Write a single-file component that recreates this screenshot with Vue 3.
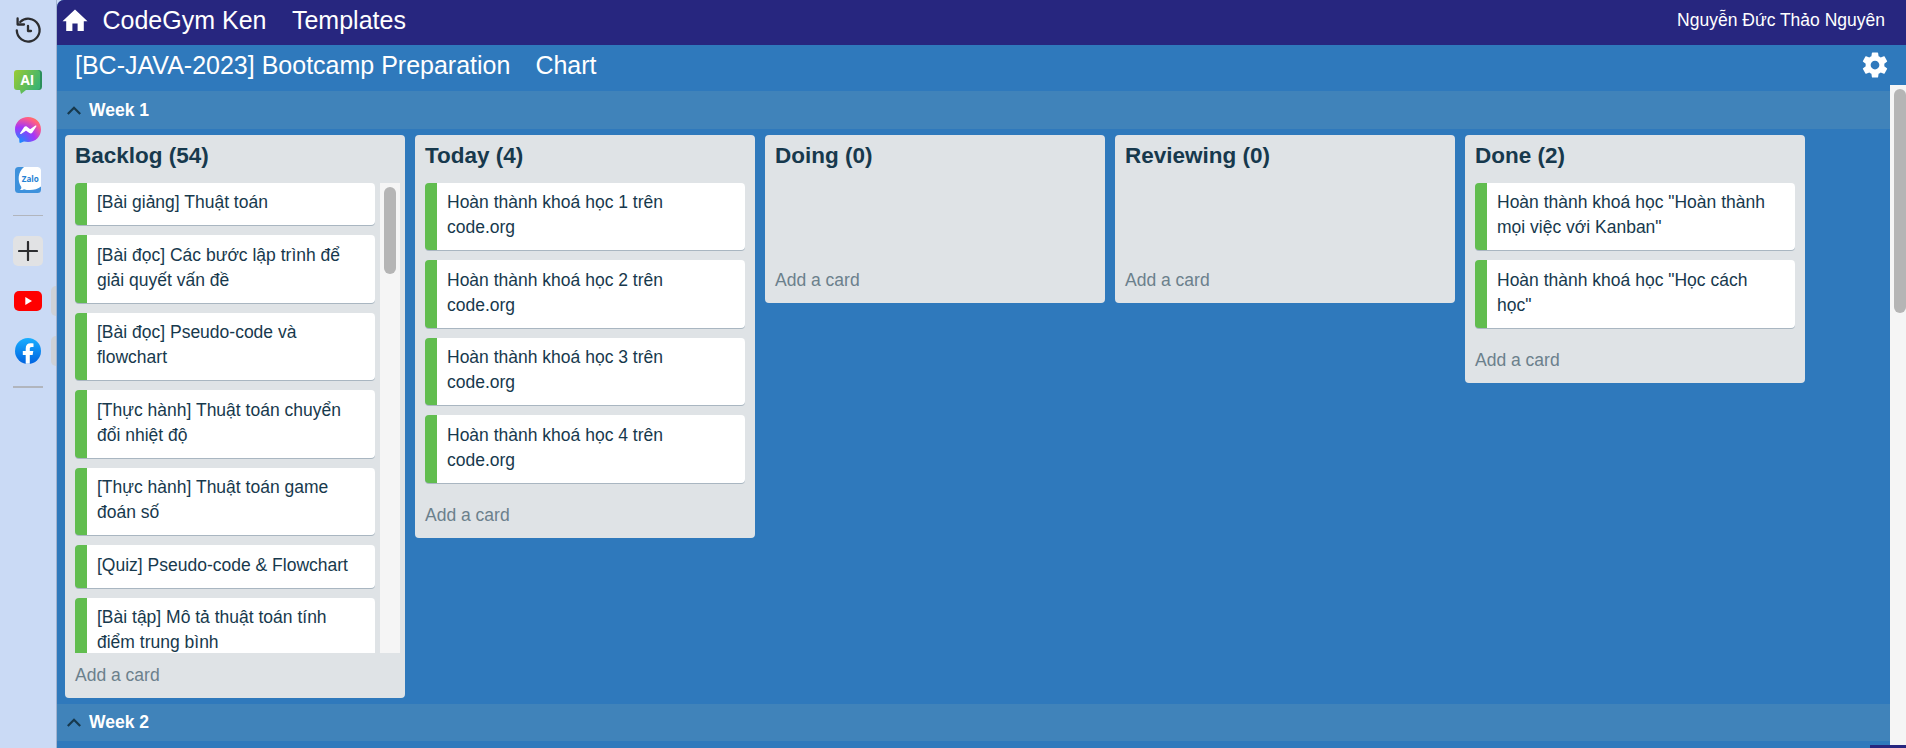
<script setup>
const today = [1, 2, 3, 4].map((n) => `Hoàn thành khoá học ${n} trên code.org`)
const columns = [
  {
    title: 'Backlog (54)',
    scroll: true,
    cards: [
      '[Bài giảng] Thuật toán',
      '[Bài đọc] Các bước lập trình để giải quyết vấn đề',
      '[Bài đọc] Pseudo-code và flowchart',
      '[Thực hành] Thuật toán chuyển đổi nhiệt độ',
      '[Thực hành] Thuật toán game đoán số',
      '[Quiz] Pseudo-code & Flowchart',
      '[Bài tập] Mô tả thuật toán tính điểm trung bình',
    ],
  },
  { title: 'Today (4)', cards: today },
  { title: 'Doing (0)', cards: [] },
  { title: 'Reviewing (0)', cards: [] },
  {
    title: 'Done (2)',
    cards: ['Hoàn thành khoá học "Hoàn thành mọi việc với Kanban"', 'Hoàn thành khoá học "Học cách học"'],
  },
]
</script>

<template>
  <div class="window">
    <aside class="side">
      <svg class="history" width="30" height="30" viewBox="0 0 30 30" fill="none" stroke="#2c2d30" stroke-width="2.3" stroke-linecap="round" stroke-linejoin="round">
        <path d="M3.800 15.500A11.400 11.400 0 1 0 7.200 7" />
        <path d="M4.600 3.500V9.500H11" />
        <path d="M15 11V16H18" />
      </svg>
      <svg class="ai" width="30" height="26" viewBox="0 0 30 26">
        <defs>
          <linearGradient id="aiFill" x1="0" y1="0" x2="1" y2="0.5">
            <stop offset="0" stop-color="#9acb33" /><stop offset="1" stop-color="#3db471" />
          </linearGradient>
        </defs>
        <rect x="4" y="1" width="25" height="20" rx="3.500" fill="#2b8f5b" />
        <path d="M4 1H24a3 3 0 0 1 3 3V18a3 3 0 0 1-3 3H13L8 25 7 21H4a3 3 0 0 1-3-3V4A3 3 0 0 1 4 1Z" fill="url(#aiFill)" />
        <text x="14.400" y="15.800" text-anchor="middle" fill="#fff" font-family="Open Sans, sans-serif" font-weight="700" font-size="13.500">AI</text>
      </svg>
      <svg class="messenger" width="26" height="26" viewBox="0 0 26 26">
        <defs>
          <radialGradient id="msg" cx="0.18" cy="1" r="1.1">
            <stop offset="0" stop-color="#0b94ff" /><stop offset="0.55" stop-color="#a334fa" />
            <stop offset="0.9" stop-color="#ff5c87" /><stop offset="1" stop-color="#ff7061" />
          </radialGradient>
        </defs>
        <path d="M13 0C5.600 0 0 5.400 0 12.400c0 3.800 1.600 7 4.200 9.300L4.400 25c0 .9.7 1.100 1.300.8L9 24.400c1.200.3 2.600.5 4 .5 7.400 0 13-5.400 13-12.500S20.400 0 13 0Z" fill="url(#msg)" />
        <path d="M5.200 16 9 10.200c.7-1 2-1.200 3-.5l2.600 2c.4.3.8.3 1.200 0L20.400 8.600c.6-.4 1.300.2.9.8L17.400 15.500c-.6 1-2 1.200-3 .5L11.500 14c-.3-.2-.7-.2-1 0L6.100 17c-.6.4-1.300-.3-.9-1Z" fill="#fff" />
      </svg>
      <svg class="zalo" width="26" height="26" viewBox="0 0 26 26">
        <rect width="26" height="26" rx="3.500" fill="#3d91dc" />
        <path d="M9 0H23a3 3 0 0 1 3 3V19.500C22 23 14 24 9 22.200 7.500 23 6 23.200 5 23c1-.8 1.500-1.800 1.300-3C2 14 3 4.500 9 0Z" fill="#fff" />
        <text x="6.800" y="14.500" textLength="17" lengthAdjust="spacingAndGlyphs" fill="#2582d4" font-family="Open Sans, sans-serif" font-weight="700" font-size="9">Zalo</text>
      </svg>
      <i class="rule"></i>
      <div class="plus">
        <svg width="20" height="20" viewBox="0 0 20 20" stroke="#2c2d30" stroke-width="2.200" stroke-linecap="round"><path d="M1 10H19M10 1V19" /></svg>
      </div>
      <div class="site youtube">
        <svg width="28" height="20" viewBox="0 0 28 20">
          <rect width="28" height="20" rx="5" fill="#f00" />
          <path d="M11.300 6V14L18 10Z" fill="#fff" />
        </svg>
        <b class="tab"></b>
      </div>
      <div class="site facebook">
        <svg width="26" height="26" viewBox="0 0 26 26">
          <defs>
            <linearGradient id="fb" x1="0" y1="0" x2="0" y2="1">
              <stop offset="0" stop-color="#19afff" /><stop offset="1" stop-color="#0062e0" />
            </linearGradient>
          </defs>
          <circle cx="13" cy="13" r="13" fill="url(#fb)" />
          <path d="M10.700 25.800V17H7.800V13h2.900V10.700c0-3.700 1.800-5.500 5-5.500 1 0 2 .1 2.800.3V9H16.600c-1.500 0-1.800.7-1.800 1.900V13h3.500l-.7 4h-2.800v8.800Z" fill="#fff" />
        </svg>
        <b class="tab"></b>
      </div>
      <i class="rule thick"></i>
    </aside>

    <main class="page">
      <header class="topbar">
        <svg class="home" width="26" height="23" viewBox="0 0 26 23" fill="#fff"><path d="M13 .5.500 12.300H4.200V22H10.400V14.600H15.600V22H21.800V12.300H25.500Z" /></svg>
        <span class="brand">CodeGym Ken</span>
        <span class="templates">Templates</span>
        <span class="user">Nguyễn Đức Thảo Nguyên</span>
      </header>
      <div class="boardbar">
        <span class="name">[BC-JAVA-2023] Bootcamp Preparation</span>
        <span class="chart">Chart</span>
        <svg class="gear" width="30" height="30" viewBox="0 0 24 24" fill="#fff"><path d="M19.430 12.980c.04-.32.07-.64.07-.98s-.03-.66-.07-.98l2.110-1.650c.19-.15.24-.42.12-.64l-2-3.460c-.12-.22-.39-.3-.61-.22l-2.490 1c-.52-.4-1.080-.73-1.690-.98l-.38-2.650C14.460 2.180 14.250 2 14 2h-4c-.25 0-.46.18-.49.42l-.38 2.650c-.61.25-1.170.59-1.690.98l-2.490-1c-.23-.09-.49 0-.61.22l-2 3.460c-.13.22-.07.49.12.64l2.110 1.650c-.04.32-.07.65-.07.98s.03.66.07.98l-2.110 1.650c-.19.15-.24.42-.12.64l2 3.460c.12.22.39.3.61.22l2.490-1c.52.4 1.080.73 1.690.98l.38 2.650c.03.24.24.42.49.42h4c.25 0 .46-.18.49-.42l.38-2.650c.61-.25 1.170-.59 1.690-.98l2.490 1c.23.09.49 0 .61-.22l2-3.460c.12-.22.07-.49-.12-.64l-2.110-1.650zM12 15.500c-1.930 0-3.500-1.570-3.500-3.500s1.570-3.500 3.500-3.500 3.500 1.570 3.500 3.500-1.570 3.500-3.500 3.500z" /></svg>
      </div>
      <section class="board">
        <div class="week first">
          <svg width="14" height="9" viewBox="0 0 14 9" fill="none" stroke="#17394d" stroke-width="2.300"><path d="M.8 8 7 1.800 13.200 8" /></svg>Week 1
        </div>
        <div class="columns">
          <section v-for="c in columns" :key="c.title" class="column">
            <h2>{{ c.title }}</h2>
            <div class="list" :class="{ clipped: c.scroll }">
              <div class="cards">
                <article v-for="t in c.cards" :key="t" class="card">{{ t }}</article>
              </div>
              <div v-if="c.scroll" class="track"><div class="thumb"></div></div>
            </div>
            <div class="add">Add a card</div>
          </section>
        </div>
        <div class="week">
          <svg width="14" height="9" viewBox="0 0 14 9" fill="none" stroke="#17394d" stroke-width="2.300"><path d="M.8 8 7 1.800 13.200 8" /></svg>Week 2
        </div>
      </section>
      <div class="pagescroll"><div class="pagethumb"></div></div>
      <div class="corner"></div>
    </main>
  </div>
</template>

<style>
body { margin: 0; overflow: hidden; }
</style>

<style scoped>
.window { display: flex; width: 1906px; height: 748px; overflow: hidden; background: #cadaf5; font-family: "Liberation Sans", Arial, sans-serif; color: #17394d; }
.window * { box-sizing: border-box; }
.side { width: 57px; flex: none; display: flex; flex-direction: column; align-items: center; border-right: 1px solid #a3b3cf; }
.side > * { flex: none; }
.side svg { display: block; }
.history { margin: 15px 1px 0 0; }
.ai { margin-top: 24px; }
.messenger { margin-top: 22px; }
.zalo { margin-top: 24px; }
.rule { width: 30px; height: 1px; background: #b1b5bd; margin-top: 22px; }
.rule.thick { height: 2px; margin-top: 22px; }
.plus { width: 30px; height: 30px; margin: 20px 1px 0 0; border-radius: 5px; background: #e1e2e4; display: flex; align-items: center; justify-content: center; }
.site { position: relative; width: 56px; display: flex; justify-content: center; }
.youtube { margin-top: 25px; }
.facebook { margin-top: 27px; }
.tab { position: absolute; right: 0; top: 50%; width: 5px; height: 30px; margin-top: -15px; border-radius: 5px 0 0 5px; background: #ced1d7; }
.page { position: relative; flex: 1; min-width: 0; background: #2f79bc; border-top-left-radius: 7px; overflow: hidden; }
.topbar { height: 45px; background: #27267f; color: #fff; display: flex; align-items: center; padding: 0 21px 5px 5px; font-size: 25px; }
.brand { margin-left: 14.500px; }
.templates { margin-left: 25.500px; }
.user { margin-left: auto; font-size: 17.500px; }
.boardbar { height: 46px; display: flex; align-items: center; padding: 0 16px 5px 18px; color: #fff; font-size: 25px; }
.chart { margin-left: 25px; }
.gear { margin: 0 0 2px auto; }
.board { width: 1833px; }
.week { height: 37.500px; padding-left: 10px; display: flex; align-items: center; gap: 8px; background: #4083ba; color: #fff; font-size: 17.500px; font-weight: 700; }
.week.first { padding-top: 1.500px; }
.columns { display: flex; align-items: flex-start; gap: 10px; padding: 6.500px 8px 6.200px; }
.column { width: 340px; flex: none; background: #dfe3e6; border-radius: 4px; }
h2 { margin: 0; height: 47.900px; padding: 7px 10px 0; font-size: 22.500px; line-height: 27px; font-weight: 700; }
.list { min-height: 75.100px; padding: 0 10px; }
.list.clipped { height: 470.100px; overflow: hidden; display: flex; gap: 5px; padding-right: 5px; }
.clipped .cards { flex: 1; }
.card { margin-bottom: 10px; padding: 7.500px 25px 10px 10px; border-left: 12px solid #61bd4f; border-radius: 4px; background: #fff; box-shadow: 0 1px 0 #a9b6c1; font-size: 17.500px; line-height: 25px; }
.track { width: 20px; padding: 4px; background: #f5f5f5; }
.thumb { height: 87px; border-radius: 6px; background: #b5b5b5; }
.add { height: 44.800px; padding: 10px; font-size: 17.500px; line-height: 24px; color: #6b808c; }
.pagescroll { position: absolute; top: 85px; right: 0; bottom: 0; width: 16px; padding: 4px 0 0 4px; background: #f5f5f5; }
.pagethumb { height: 224px; border-radius: 6px; background: #b5b5b5; }
.corner { position: absolute; right: 0; bottom: 0; width: 36px; height: 3px; background: #27267f; }
</style>
